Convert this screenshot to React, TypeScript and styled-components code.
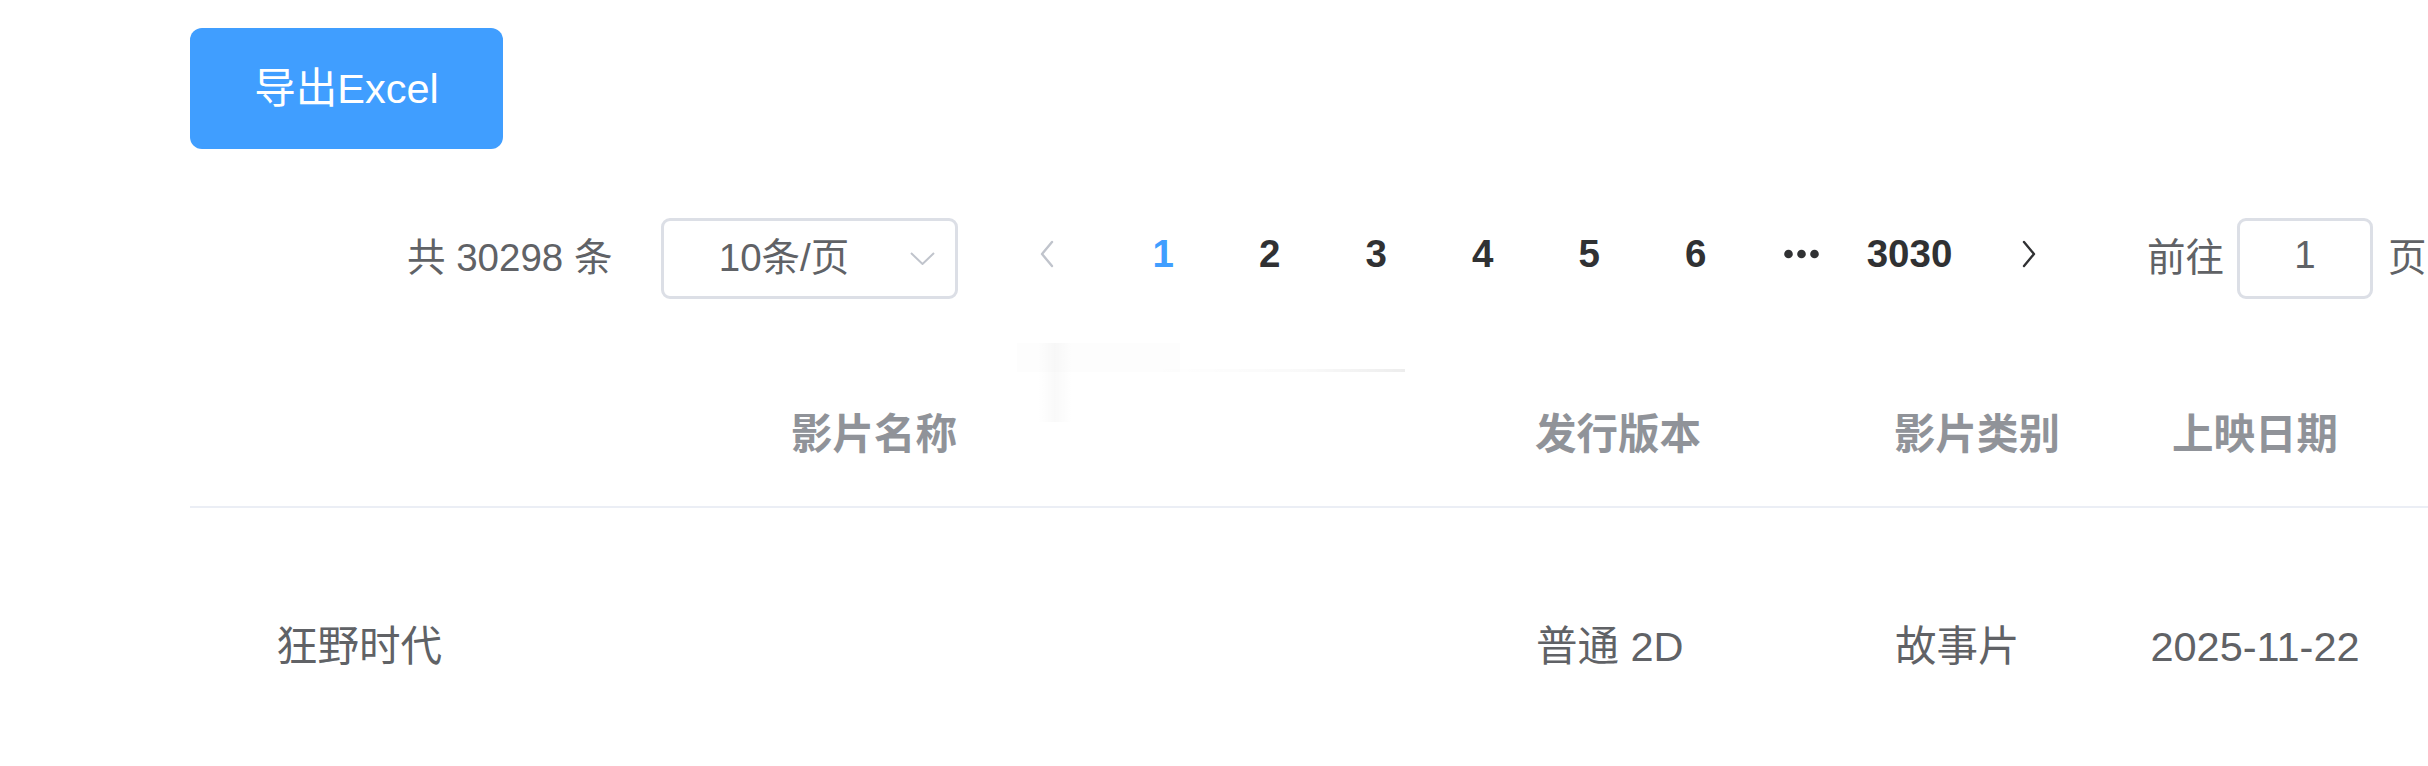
import React from "react";
import styled, { createGlobalStyle } from "styled-components";

const Global = createGlobalStyle`
  html, body { margin: 0; padding: 0; background: #fff; }
  body { font-family: "Liberation Sans", "Noto Sans CJK SC", sans-serif; }
`;

const Page = styled.div`
  width: 2428px;
  height: 766px;
  overflow: hidden;
  box-sizing: border-box;
  padding: 28px 0 0 190px;
`;

const ExportButton = styled.button`
  display: flex;
  align-items: center;
  justify-content: center;
  box-sizing: border-box;
  width: 313px;
  height: 121px;
  padding: 0 0 8px;
  border: none;
  border-radius: 12px;
  background: #409eff;
  color: #fff;
  font-family: inherit;
  font-size: 41.5px;
  cursor: pointer;
`;

const Pagination = styled.div`
  display: flex;
  align-items: center;
  height: 81px;
  margin-top: 69px;
  padding-left: 217px;
  color: #606266;
  font-size: 38.5px;
`;

const Total = styled.span`
  flex: none;
  width: 254px;
  padding-bottom: 9px;
  white-space: pre;
`;

const SizeSelect = styled.div`
  position: relative;
  flex: none;
  box-sizing: border-box;
  width: 297px;
  height: 81px;
  border: 3px solid #dcdfe6;
  border-radius: 9px;
  display: flex;
  align-items: center;
  justify-content: center;
  padding: 0 75px 9px 24px;
  color: #606266;
`;

const SelectArrow = styled.svg`
  position: absolute;
  right: 20px;
  top: 50%;
  margin-top: -7px;
`;

const NavButton = styled.div<{ $ml?: number; $pl?: number; $pr?: number }>`
  flex: none;
  box-sizing: border-box;
  width: 107px;
  height: 81px;
  display: flex;
  align-items: center;
  justify-content: center;
  margin-left: ${(p) => p.$ml ?? 0}px;
  padding-left: ${(p) => p.$pl ?? 0}px;
  padding-right: ${(p) => p.$pr ?? 0}px;
  padding-bottom: 9px;
`;

const Pager = styled.ul`
  display: flex;
  list-style: none;
  margin: 0;
  padding: 0;
`;

const PageItem = styled.li<{ $active?: boolean; $w?: number }>`
  flex: none;
  box-sizing: border-box;
  width: ${(p) => p.$w ?? 106.5}px;
  height: 81px;
  padding-bottom: 9px;
  display: flex;
  align-items: center;
  justify-content: center;
  font-weight: 700;
  color: ${(p) => (p.$active ? "#409eff" : "#303133")};
`;

const JumpLabel = styled.span<{ $ml: number }>`
  flex: none;
  margin-left: ${(p) => p.$ml}px;
  padding-bottom: 9px;
  white-space: nowrap;
`;

const JumpInput = styled.div`
  flex: none;
  box-sizing: border-box;
  width: 136px;
  height: 81px;
  margin-left: 13px;
  padding-bottom: 7px;
  border: 3px solid #dcdfe6;
  border-radius: 9px;
  display: flex;
  align-items: center;
  justify-content: center;
  color: #606266;
`;

const Table = styled.div`
  position: relative;
  margin-top: 66px;
`;

const Row = styled.div<{ $h: number; $head?: boolean }>`
  display: grid;
  grid-template-columns: 1315px 359px 279px 224px 1fr;
  align-items: center;
  box-sizing: border-box;
  height: ${(p) => p.$h}px;
  padding-bottom: ${(p) => (p.$head ? 3 : 0)}px;
  border-bottom: ${(p) => (p.$head ? "2px solid #ebeef5" : "none")};
`;

const Cell = styled.div<{ $pl?: number; $center?: boolean; $head?: boolean }>`
  padding-left: ${(p) => p.$pl ?? 0}px;
  text-align: ${(p) => (p.$center ? "center" : "left")};
  font-size: 41.5px;
  line-height: 69px;
  white-space: nowrap;
  font-weight: ${(p) => (p.$head ? 700 : 400)};
  color: ${(p) => (p.$head ? "#909399" : "#606266")};
`;

const ShadowBand = styled.div`
  position: absolute;
  left: 848px;
  top: -22px;
  width: 34px;
  height: 79px;
  background: linear-gradient(to right, rgba(0,0,0,0), rgba(0,0,0,0.022), rgba(0,0,0,0));
  pointer-events: none;
`;

const ShadowBox = styled.div`
  position: absolute;
  left: 827px;
  top: -22px;
  width: 163px;
  height: 29px;
  background: rgba(0,0,0,0.008);
  pointer-events: none;
`;

const ShadowLine = styled.div`
  position: absolute;
  left: 960px;
  top: 4px;
  width: 255px;
  height: 3px;
  background: linear-gradient(to right, rgba(0,0,0,0), rgba(0,0,0,0.025) 60%, rgba(0,0,0,0.07));
  pointer-events: none;
`;

const Chevron = ({ dir, color }: { dir: "left" | "right"; color: string }) => (
  <svg width="14" height="28" viewBox="0 0 14 28">
    <polyline
      points={dir === "left" ? "12,2 2,14 12,26" : "2,2 12,14 2,26"}
      fill="none"
      stroke={color}
      strokeWidth="2.4"
      strokeLinecap="round"
      strokeLinejoin="round"
    />
  </svg>
);

const More = () => (
  <svg width="36" height="10" viewBox="0 0 36 10">
    <circle cx="4.5" cy="5" r="4.3" fill="#303133" />
    <circle cx="17.5" cy="5" r="4.3" fill="#303133" />
    <circle cx="30.5" cy="5" r="4.3" fill="#303133" />
  </svg>
);

export default function App() {
  const pages = ["1", "2", "3", "4", "5", "6"];
  return (
    <>
      <Global />
      <Page>
        <ExportButton>导出Excel</ExportButton>
        <Pagination>
          <Total>共 30298 条</Total>
          <SizeSelect>
            10条/页
            <SelectArrow width="25" height="13" viewBox="0 0 25 13">
              <polyline points="1,1 12.5,12 24,1" fill="none" stroke="#c0c4cc" strokeWidth="2" />
            </SelectArrow>
          </SizeSelect>
          <NavButton $ml={45} $pr={19}>
            <Chevron dir="left" color="#c0c4cc" />
          </NavButton>
          <Pager>
            {pages.map((p) => (
              <PageItem key={p} $active={p === "1"}>
                {p}
              </PageItem>
            ))}
            <PageItem>
              <More />
            </PageItem>
            <PageItem $w={108}>3030</PageItem>
          </Pager>
          <NavButton $pl={24}>
            <Chevron dir="right" color="#303133" />
          </NavButton>
          <JumpLabel $ml={76.5}>前往</JumpLabel>
          <JumpInput>1</JumpInput>
          <JumpLabel $ml={15}>页</JumpLabel>
        </Pagination>
        <Table>
          <ShadowBox />
          <ShadowBand />
          <ShadowLine />
          <Row $h={143} $head>
            <Cell $head $pl={601}>影片名称</Cell>
            <Cell $head $pl={30}>发行版本</Cell>
            <Cell $head $pl={30}>影片类别</Cell>
            <Cell $head $center>上映日期</Cell>
            <div />
          </Row>
          <Row $h={276}>
            <Cell $pl={86}>狂野时代</Cell>
            <Cell $pl={31}>普通 2D</Cell>
            <Cell $pl={31}>故事片</Cell>
            <Cell $center>2025-11-22</Cell>
            <div />
          </Row>
        </Table>
      </Page>
    </>
  );
}
